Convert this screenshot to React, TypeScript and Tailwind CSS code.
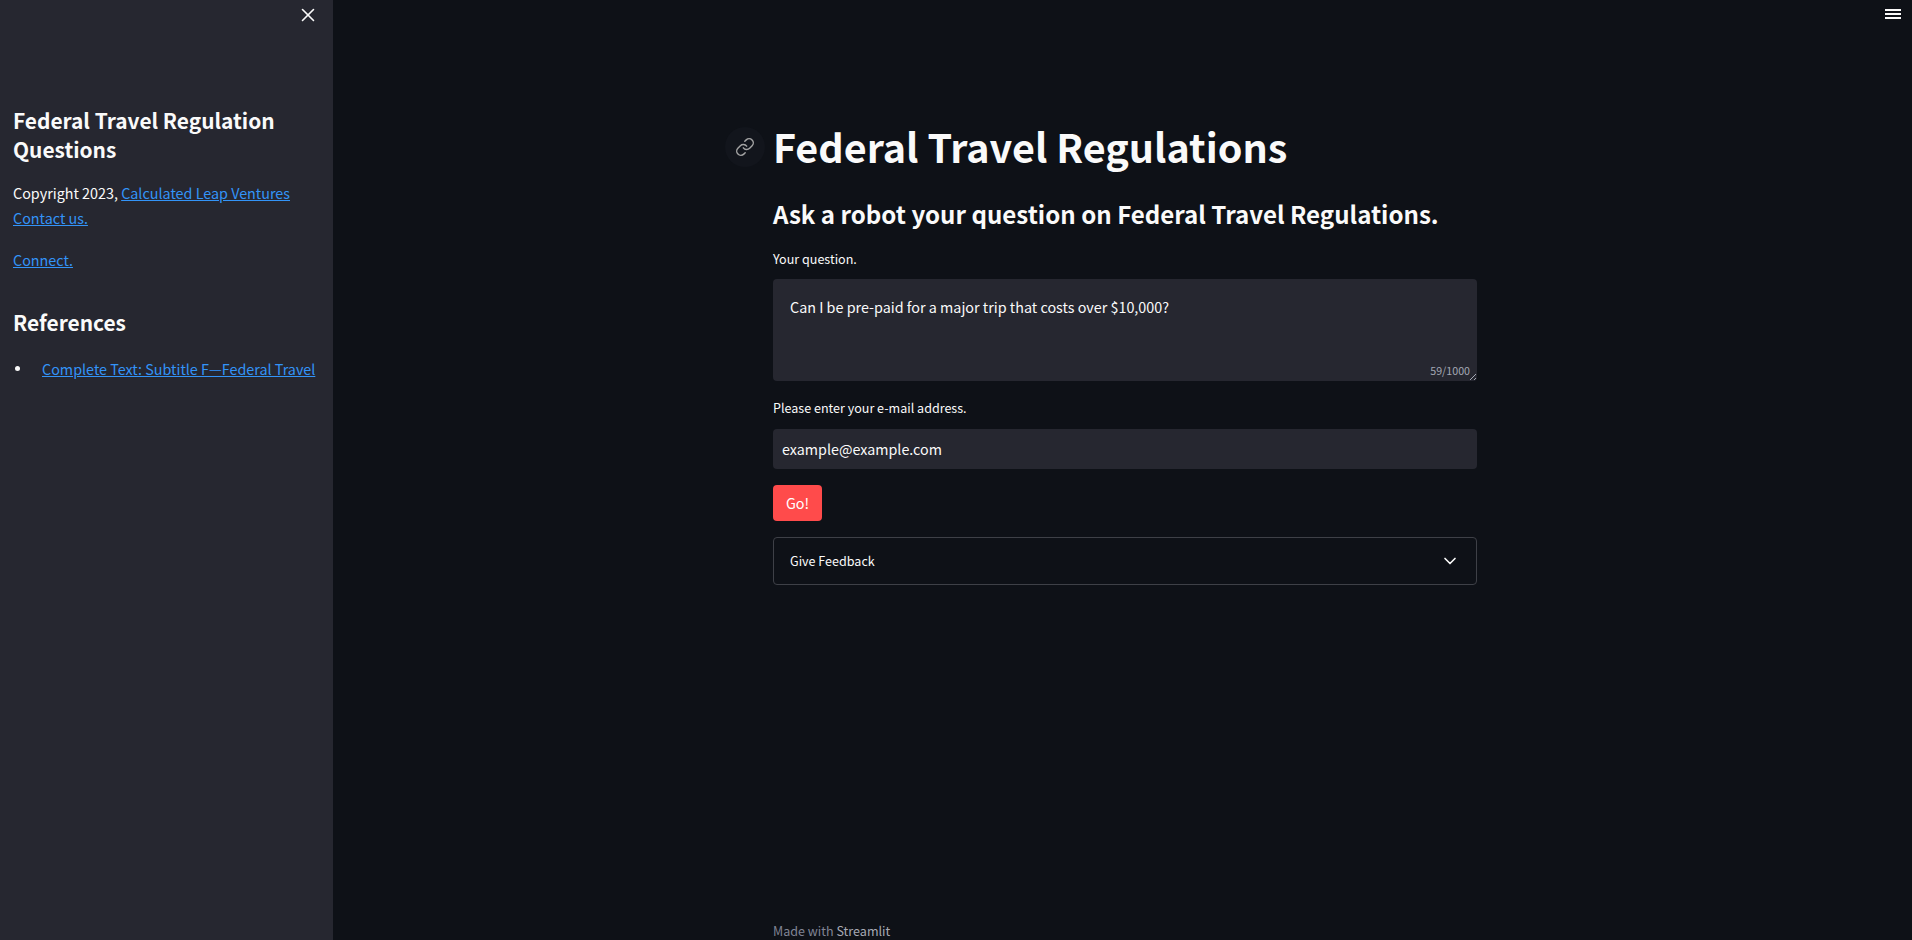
import { ChevronDown, Link, X } from 'lucide-react'

const font = 'font-["Noto_Sans_CJK_SC","Source_Sans_Pro",sans-serif]'

function Hamburger() {
  return (
    <svg width="16" height="10" viewBox="0 0 16 10" className="block">
      <rect x="0" y="0" width="16" height="2" fill="#fafafa" />
      <rect x="0" y="4" width="16" height="2" fill="#fafafa" />
      <rect x="0" y="8" width="16" height="2" fill="#fafafa" />
    </svg>
  )
}

function Sidebar() {
  return (
    <aside className="w-[333px] shrink-0 bg-[#262730] px-[13px] h-full">
      <div className="flex justify-end pt-[4px] pr-[1px] h-[106px]">
        <X size={22} strokeWidth={1.75} className="text-[#fafafa]" />
      </div>
      <h2 className="text-[20.9px] leading-[29px] font-semibold text-[#fafafa]">Federal Travel Regulation Questions</h2>
      <p className="text-[14.35px] leading-[25px] mt-[16px] text-[#fafafa] whitespace-nowrap">
        Copyright 2023, <a className="text-[#3394f8] underline">Calculated Leap Ventures</a>
        <br />
        <a className="text-[#3394f8] underline">Contact us.</a>
      </p>
      <p className="text-[14.35px] leading-[25px] mt-[17px]">
        <a className="text-[#3394f8] underline">Connect.</a>
      </p>
      <h3 className="text-[20.9px] leading-[29px] font-semibold text-[#fafafa] mt-[36px]">References</h3>
      <ul className="mt-[19px] list-none text-[#fafafa]">
        <li className="flex items-center text-[14.35px] leading-[25px] whitespace-nowrap">
          <span className="ml-[2px] w-[5px] h-[5px] rounded-full bg-[#fafafa] shrink-0" />
          <a className="ml-[22px] text-[#3394f8] underline">Complete Text: Subtitle F—Federal Travel</a>
        </li>
      </ul>
    </aside>
  )
}

export default function App() {
  return (
    <div className={`flex h-[940px] w-[1912px] overflow-hidden bg-[#0e1117] text-[#fafafa] ${font}`}>
      <Sidebar />
      <main className="relative flex-1 h-full flex flex-col pl-[440px]">
        <button className="absolute right-[11px] top-[9px]">
          <Hamburger />
        </button>
        <div className="w-[704px] flex-1 flex flex-col">
          <div className="relative pt-[117px]">
            <div className="absolute left-[-48px] top-[127px] w-[40px] h-[40px] rounded-full bg-[#12151c] flex items-center justify-center">
              <Link size={20} strokeWidth={1.75} className="text-[#a3a3a3]" />
            </div>
            <h1 className="text-[39.5px] leading-[58px] font-bold whitespace-nowrap">Federal Travel Regulations</h1>
          </div>
          <h2 className="text-[24.1px] leading-[36px] font-semibold mt-[21px] whitespace-nowrap">Ask a robot your question on Federal Travel Regulations.</h2>
          <label className="text-[12.55px] leading-[18px] mt-[18px] block">Your question.</label>
          <div className="relative mt-[11px] h-[102px] rounded-[4px] bg-[#262730] px-[17px] pt-[15px] text-[14.35px] leading-[25px]">
            Can I be pre-paid for a major trip that costs over $10,000?
            <span className="absolute right-[7px] bottom-[2px] text-[10.7px] leading-[16px] text-[#a3a8b4]">59/1000</span>
            <svg width="8" height="8" viewBox="0 0 8 8" className="absolute right-[0px] bottom-[0px]">
              <path d="M1 7 L7 1 M5 7 L7 5" stroke="#a3a8b4" strokeWidth="1" />
            </svg>
          </div>
          <label className="text-[12.55px] leading-[18px] mt-[18px] block">Please enter your e-mail address.</label>
          <div className="mt-[12px] h-[40px] rounded-[4px] bg-[#262730] px-[9px] flex items-center text-[14.3px]">example@example.com</div>
          <button className="mt-[16px] w-[49px] h-[36px] rounded-[4px] bg-[#ff4b4b] pb-[1px] text-[14.35px] text-white flex items-center justify-center">Go!</button>
          <div className="mt-[16px] h-[48px] rounded-[4px] border border-[#3e4047] flex items-center justify-between pl-[16px] pr-[16px] text-[12.55px]">
            <span>Give Feedback</span>
            <ChevronDown size={20} strokeWidth={2} className="text-[#fafafa]" />
          </div>
          <div className="mt-auto text-[12.55px] leading-[18px] text-[#808495] h-[18px]">
            Made with <span className="text-[#a6a9b4]">Streamlit</span>
          </div>
        </div>
      </main>
    </div>
  )
}
